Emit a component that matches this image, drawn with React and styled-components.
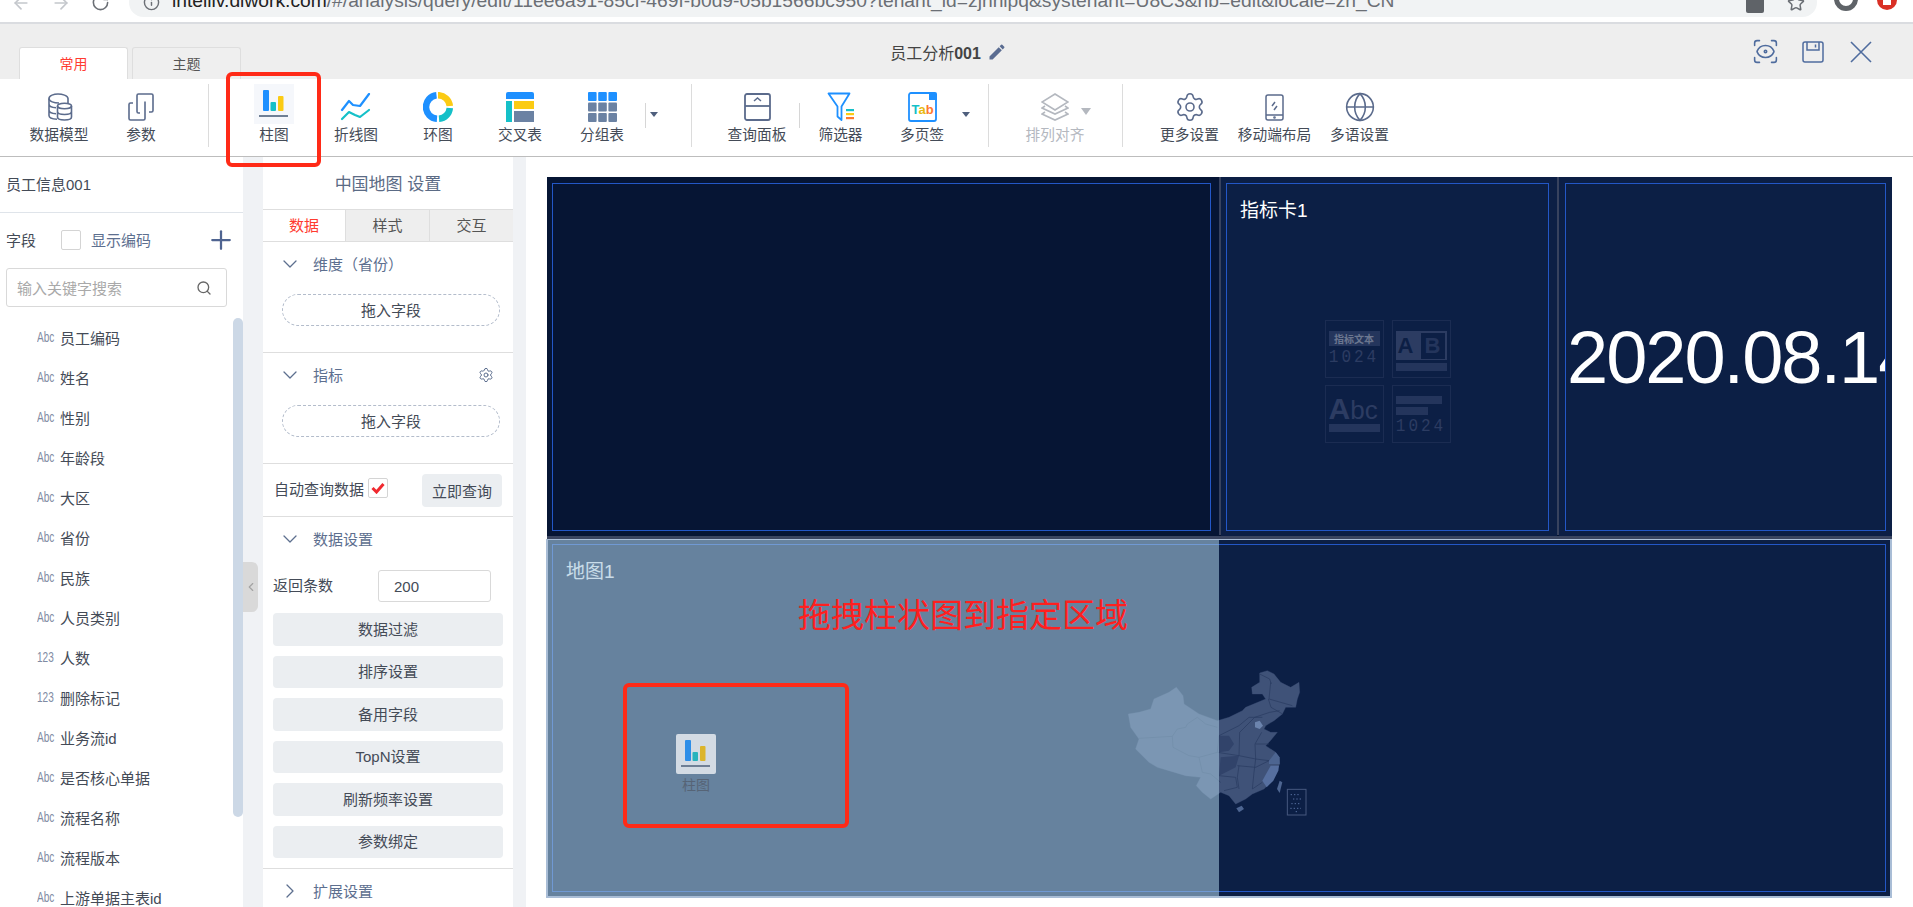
import styled, { createGlobalStyle } from 'styled-components';
import {
  ArrowLeft,
  ArrowRight,
  ChevronDown,
  ChevronLeft,
  ChevronRight,
  Globe,
  Info,
  Plus,
  RotateCw,
  ScanEye,
  Search,
  Settings,
  Star,
} from 'lucide-react';
import { MdEdit } from 'react-icons/md';

const GlobalStyle = createGlobalStyle`
  html, body {
    margin: 0;
    height: 100%;
    overflow: hidden;
    background: #fff;
  }
  * {
    box-sizing: border-box;
  }
  body {
    font-family: 'Liberation Sans', 'Noto Sans CJK SC', sans-serif;
    font-size: 15px;
    color: #444b57;
  }
`;

const Page = styled.div`
  position: relative;
  width: 1913px;
  height: 907px;
  overflow: hidden;
`;

/* browser chrome, cut off at the top of the shot */
const ChromeBar = styled.div`
  height: 24px;
  display: flex;
  align-items: flex-start;
  overflow: hidden;
  background: #fff;
  border-bottom: 2px solid #dadce0;
  color: #6b6f75;
`;

const ChromeIcons = styled.div`
  width: 129px;
  height: 29px;
  margin-top: -12px;
  padding-left: 11px;
  display: flex;
  align-items: center;
  gap: 20px;
  flex-shrink: 0;
`;

const AddressBar = styled.div`
  width: 1688px;
  height: 29px;
  margin-top: -12px;
  padding: 0 12px 0 14px;
  display: flex;
  align-items: center;
  flex-shrink: 0;
  background: #f1f3f4;
  border-radius: 15px;
`;

const Url = styled.span`
  margin-left: 12px;
  padding-bottom: 4px;
  flex: 1;
  font-size: 19.25px;
  white-space: nowrap;
  color: #6b6f75;

  b {
    font-weight: 400;
    color: #222;
  }
`;

const Translate = styled.span`
  width: 18px;
  height: 20px;
  margin-right: 23px;
  border-radius: 2px;
  background: #5f6368;
  flex-shrink: 0;
`;

const Avatar = styled.span`
  width: 24px;
  height: 24px;
  margin: -13px 0 0 17px;
  border-radius: 50%;
  border: 5px solid #5f6368;
  flex-shrink: 0;
`;

const Alert = styled.span`
  position: relative;
  width: 20px;
  height: 20px;
  margin: -10px 0 0 19px;
  border-radius: 50%;
  background: #d93025;
  flex-shrink: 0;

  &::after {
    content: '';
    position: absolute;
    top: 8px;
    left: 6px;
    width: 8px;
    height: 7px;
    background: #fff;
  }
`;

const Header = styled.header`
  height: 55px;
  display: grid;
  grid-template-columns: 1fr auto 1fr;
  background: #eeeeee;
`;

const TabRow = styled.div`
  padding-left: 19px;
  display: flex;
  align-items: flex-end;
  gap: 4px;
`;

const TopTab = styled.div`
  width: 109px;
  height: 32px;
  padding-bottom: 2px;
  display: flex;
  align-items: center;
  justify-content: center;
  font-size: 14px;
  border: 1px solid #dedede;
  border-bottom: 0;
  border-radius: 3px 3px 0 0;
  background: ${({ $active }) => ($active ? '#fff' : '#efefef')};
  color: ${({ $active }) => ($active ? '#ff3b30' : '#555')};
`;

const Title = styled.div`
  display: flex;
  align-items: center;
  gap: 6px;
  margin-right: 16px;
  font-size: 16px;
  color: #444;

  b {
    font-weight: 700;
  }

  svg {
    color: #5a6c91;
  }
`;

const HeaderActions = styled.div`
  padding-right: 41px;
  display: flex;
  align-items: center;
  justify-content: flex-end;
  gap: 26px;
  color: #4f6c9e;
`;

const PreviewIcon = styled(ScanEye)`
  margin: 0 -4px;
`;

const Toolbar = styled.nav`
  height: 78px;
  padding-left: 18px;
  display: flex;
  align-items: flex-start;
  background: #fff;
  border-bottom: 1px solid #bdbdbd;
`;

const ToolItem = styled.div`
  position: relative;
  width: ${({ $w }) => $w || 82}px;
  height: 69px;
  padding-top: 12px;
  display: flex;
  flex-direction: column;
  align-items: center;
  flex-shrink: 0;
  color: ${({ $off }) => ($off ? '#b4b8bf' : '#444b57')};
`;

const ToolIcon = styled.div`
  height: 32px;
  display: flex;
  align-items: center;
  justify-content: center;
`;

const ToolLabel = styled.span`
  font-size: 14.7px;
  line-height: 24px;
  white-space: nowrap;
`;

const SelectedIcon = styled.div`
  position: absolute;
  top: 5px;
  left: 21px;
  width: 40px;
  height: 40px;
  display: flex;
  align-items: center;
  justify-content: center;
  background: #f5f7fb;
`;

const BigSep = styled.div`
  width: 1px;
  height: 63px;
  margin: 5px ${({ $r }) => $r}px 0 ${({ $l }) => $l}px;
  background: #dcdcdc;
  flex-shrink: 0;
`;

const SmallSep = styled.div`
  width: 1px;
  height: 25px;
  margin: 24px 0 0 ${({ $l }) => $l}px;
  background: #d6d6d6;
  flex-shrink: 0;
`;

const Caret = styled.div`
  width: 16px;
  margin: 33px 0 0 ${({ $l }) => $l || 0}px;
  display: flex;
  justify-content: center;
  flex-shrink: 0;

  &::after {
    content: '';
    border: 4px solid transparent;
    border-top: 5px solid #4f5f7d;
    border-bottom: 0;
  }
`;

const GreyCaret = styled.span`
  position: absolute;
  top: 29px;
  left: 67px;
  border: 5px solid transparent;
  border-top: 7px solid #b4b8bf;
  border-bottom: 0;
`;

const Body = styled.main`
  height: 750px;
  display: flex;
`;

const FieldPanel = styled.aside`
  position: relative;
  width: 243px;
  overflow: hidden;
  flex-shrink: 0;
  background: #fff;
`;

const DatasetName = styled.div`
  height: 56px;
  padding: 0 0 2px 6px;
  display: flex;
  align-items: center;
  font-size: 15px;
  border-bottom: 1px solid #dfe4ea;
`;

const FieldTools = styled.div`
  height: 55px;
  padding: 0 7px 2px 6px;
  display: flex;
  align-items: center;
`;

const Checkbox = styled.span`
  width: 20px;
  height: 20px;
  margin: 0 10px 0 ${({ $l }) => $l || 0}px;
  display: inline-flex;
  align-items: center;
  justify-content: center;
  border: 1px solid #d4d4d4;
  border-radius: 2px;
  background: #fff;
  flex-shrink: 0;
`;

const ShowCode = styled.span`
  flex: 1;
  color: #5d6f8f;
`;

const SearchBox = styled.div`
  width: 221px;
  height: 39px;
  margin-left: 6px;
  padding: 0 14px 0 10px;
  display: flex;
  align-items: center;
  justify-content: space-between;
  border: 1px solid #d9d9d9;
  border-radius: 3px;
  color: #a9a9a9;
`;

const FieldList = styled.ul`
  margin: 10px 0 0;
  padding: 0;
  list-style: none;
`;

const FieldItem = styled.li`
  height: 40px;
  padding-left: 37px;
  display: flex;
  align-items: center;
  white-space: nowrap;
`;

const FieldType = styled.span`
  width: 23px;
  font-size: 14px;
  color: #7f8ba3;
  transform: scaleX(0.72);
  transform-origin: left center;
`;

const ScrollThumb = styled.div`
  position: absolute;
  top: 161px;
  right: 0;
  width: 10px;
  height: 499px;
  border-radius: 5px;
  background: #ccd8e6;
`;

const Gutter = styled.div`
  position: relative;
  width: ${({ $w }) => $w}px;
  flex-shrink: 0;
  background: #f0f2f5;
`;

const CollapseHandle = styled.div`
  position: absolute;
  top: 405px;
  left: 0;
  width: 15px;
  height: 50px;
  display: flex;
  align-items: center;
  justify-content: center;
  border-radius: 0 6px 6px 0;
  background: #d9d9d9;
  color: #a3a3a3;
`;

const SettingsPanel = styled.section`
  width: 250px;
  overflow: hidden;
  flex-shrink: 0;
  background: #fff;
`;

const SettingsTitle = styled.div`
  height: 52px;
  padding-bottom: 2px;
  display: flex;
  align-items: center;
  justify-content: center;
  font-size: 17px;
  color: #5b6b85;
`;

const SettingsTabs = styled.div`
  height: 33px;
  display: grid;
  grid-template-columns: 82px 84px 84px;
  border-top: 1px solid #dedede;
  border-bottom: 1px solid #dedede;
`;

const SettingsTab = styled.div`
  padding-bottom: 2px;
  display: flex;
  align-items: center;
  justify-content: center;
  background: ${({ $active }) => ($active ? '#fff' : '#eeeeee')};
  color: ${({ $active }) => ($active ? '#ff3b30' : '#555')};
  border-left: ${({ $active }) => ($active ? '0' : '1px solid #dedede')};
`;

const Section = styled.div`
  padding: 10px 0 ${({ $pb }) => $pb}px;
  border-bottom: ${({ $last }) => ($last ? '0' : '1px solid #dedede')};
`;

const SectionHead = styled.div`
  height: 26px;
  padding: 0 19px 3px 15px;
  display: flex;
  align-items: center;
  gap: 11px;
  color: #5d6f8f;

  span {
    flex: 1;
  }
`;

const DropPill = styled.div`
  width: 218px;
  height: 32px;
  margin: 16px 0 0 19px;
  padding-bottom: 2px;
  display: flex;
  align-items: center;
  justify-content: center;
  border: 1px dashed #b3bccb;
  border-radius: 16px;
`;

const AutoRow = styled.div`
  height: 53px;
  padding: 0 10px 0 11px;
  display: flex;
  align-items: center;
  border-bottom: 1px solid #dedede;
  white-space: nowrap;
`;

const AutoLabel = styled.div`
  display: flex;
  align-items: center;
  margin-bottom: 4px;
`;

const QueryButton = styled.div`
  width: 80px;
  height: 33px;
  margin-left: 24px;
  display: flex;
  align-items: center;
  justify-content: center;
  border-radius: 4px;
  background: #ebeef1;
`;

const CountRow = styled.div`
  height: 32px;
  margin: 17px 0 11px;
  padding-left: 10px;
  display: flex;
  align-items: center;
`;

const CountLabel = styled.span`
  margin-bottom: 3px;
`;

const CountInput = styled.div`
  width: 113px;
  height: 32px;
  margin-left: 45px;
  padding-left: 15px;
  display: flex;
  align-items: center;
  border: 1px solid #d9d9d9;
  border-radius: 3px;
  font-size: 15px;
`;

const ButtonStack = styled.div`
  padding: 0 10px;
  display: flex;
  flex-direction: column;
  gap: 10px;
`;

const WideButton = styled.div`
  height: 32.5px;
  padding-bottom: 2px;
  display: flex;
  align-items: center;
  justify-content: center;
  border-radius: 4px;
  background: #ebeef1;
`;

const Canvas = styled.div`
  flex: 1;
  padding: 20px 21px 0 21px;
  background: #fff;
`;

const TopRow = styled.div`
  height: 359px;
  display: flex;
  background: #06142f;
`;

const Cell = styled.div`
  width: ${({ $w }) => $w}px;
  padding: 6px ${({ $r }) => $r}px 5px ${({ $l }) => $l}px;
  flex-shrink: 0;
  background: ${({ $dark }) => ($dark ? '#061534' : '#0c1f45')};
`;

const CellDivider = styled.div`
  width: 2px;
  height: 358px;
  flex-shrink: 0;
  background: #37425e;
`;

const CardFrame = styled.div`
  height: 100%;
  display: flex;
  flex-direction: column;
  overflow: hidden;
  border: 1px solid #2357c7;
`;

const CardTitle = styled.div`
  height: 26px;
  margin: 14px 0 0 13px;
  font-size: 19px;
  line-height: 26px;
  color: #fff;
`;

const TileArea = styled.div`
  flex: 1;
  padding-top: 9px;
  display: flex;
  align-items: center;
  justify-content: center;
`;

const TileGrid = styled.div`
  display: grid;
  grid-template-columns: 59px 59px;
  grid-template-rows: 58px 58px;
  gap: 7px 8px;
`;

const Tile = styled.div`
  padding: 10px 3px 3px;
  display: flex;
  flex-direction: column;
  gap: 3px;
  overflow: hidden;
  border: 1px solid #1b2c52;
  color: #2c3c62;
`;

const TileLabel = styled.div`
  height: 15px;
  display: flex;
  align-items: center;
  justify-content: center;
  font-size: 10px;
  font-weight: 700;
  white-space: nowrap;
  background: #24355c;
  color: #6c7790;
`;

const Digits = styled.div`
  font-family: 'Liberation Mono', monospace;
  font-size: 16px;
  line-height: 17px;
  letter-spacing: 3px;
  white-space: nowrap;
  text-align: center;
  color: #2c3c62;
  transform: scaleY(1.2);
`;

const TileBar = styled.div`
  width: ${({ $w }) => $w || '100%'};
  height: ${({ $h }) => $h || 8}px;
  flex-shrink: 0;
  background: #24355c;
`;

const AbBlock = styled.div`
  height: 29px;
  padding: 0 2px;
  display: flex;
  align-items: center;
  justify-content: space-between;
  font-size: 22px;
  font-weight: 700;
  background: #2c3c62;
  color: #0c1f45;

  span + span {
    padding: 0 4px;
    background: #0c1f45;
    color: #24355c;
  }
`;

const AbcText = styled.div`
  height: 25px;
  font-size: 26px;
  line-height: 25px;
  white-space: nowrap;
  color: #2c3c62;

  b {
    font-size: 30px;
  }
`;

const DateText = styled.div`
  height: 100%;
  padding-left: 1px;
  display: flex;
  align-items: center;
  font-size: 74px;
  letter-spacing: -2px;
  white-space: nowrap;
  color: #fff;
`;

const Band = styled.div`
  height: 3px;
  background: #3a4560;
`;

const MapBlock = styled.div`
  position: relative;
  width: 1346px;
  height: 359px;
  margin-left: -1px;
  padding: 4px;
  border: 2px solid #a9bdd6;
  border-top-width: 1px;
  background: #0c1f45;
`;

const MapArea = styled.div`
  flex: 1;
  padding-top: 12px;
  display: flex;
  align-items: center;
  justify-content: center;
`;

const DropOverlay = styled.div`
  position: absolute;
  top: 0;
  bottom: 0;
  left: 0;
  width: 671px;
  background: rgba(164, 196, 219, 0.6);
`;

const Hint = styled.div`
  position: absolute;
  top: 50px;
  left: 250px;
  font-family: 'Noto Sans CJK SC', sans-serif;
  font-size: 33px;
  line-height: 46px;
  white-space: nowrap;
  color: #ff1f1f;
`;

const RedBox = styled.div`
  position: absolute;
  top: ${({ $t }) => $t}px;
  left: ${({ $l }) => $l}px;
  width: ${({ $w }) => $w}px;
  height: ${({ $h }) => $h}px;
  border: 4px solid #ff2a17;
  border-radius: 6px;
`;

const DragGhost = styled.div`
  position: absolute;
  top: 194px;
  left: 128px;
  width: 40px;
  display: flex;
  flex-direction: column;
  align-items: center;
  font-size: 14px;
  line-height: 22px;
  color: #566476;
`;

const GhostIcon = styled.div`
  width: 40px;
  height: 40px;
  display: flex;
  align-items: center;
  justify-content: center;
  border-radius: 2px;
  background: #d3dbe4;
`;

const SLATE = '#5b6b8c';

const DbIcon = () => (
  <svg width="28" height="32" viewBox="0 0 28 32" fill="none" stroke={SLATE} strokeWidth="1.6">
    <path d="M14 12c-5 0-10-1.500-10-4.500S9 3 13 3s10 1.500 10 4.500v5" />
    <path d="M4 7.500v17c0 2 3 3.500 8 3.800M4 13c0 2 3 3.500 7 3.800M4 19c0 2 3 3.500 7 3.800" />
    <ellipse cx="19.500" cy="15" rx="7" ry="2.800" />
    <path d="M12.500 15v11c0 1.700 3 3 7 3s7-1.300 7-3V15M12.500 20.500c0 1.700 3 3 7 3s7-1.300 7-3" />
  </svg>
);

const ParamIcon = () => (
  <svg width="28" height="32" viewBox="0 0 28 32" fill="none" stroke={SLATE} strokeWidth="1.6">
    <path d="M10 9V4.500A1.500 1.500 0 0 1 11.500 3h13A1.500 1.500 0 0 1 26 4.500v15a1.500 1.500 0 0 1-1.500 1.500H22" />
    <path d="M18 12v15.500a1.500 1.500 0 0 1-1.500 1.500h-13A1.500 1.500 0 0 1 2 27.500v-14A1.500 1.500 0 0 1 3.500 12H6" />
    <path d="M10 9v11.500a1.500 1.500 0 0 0 1.500 1.500H13M18 12v-1.500" />
  </svg>
);

const BarChartIcon = ({ dim }) => (
  <svg width="30" height="28" viewBox="0 0 30 28">
    <rect x="4" y="0" width="6" height="21" rx="1" fill={dim ? '#2d8ee8' : '#1e90ff'} />
    <rect x="11.500" y="12" width="5.500" height="9" rx="1" fill={dim ? '#27b3bd' : '#15c0c8'} />
    <rect x="19" y="6" width="5.500" height="15" rx="1" fill={dim ? '#dcb52c' : '#fbcb14'} />
    <rect x="0" y="25" width="29" height="2" fill="#6f7f95" />
  </svg>
);

const LineChartIcon = () => (
  <svg width="32" height="28" viewBox="0 0 32 28" fill="none" strokeWidth="2.200" strokeLinecap="round" strokeLinejoin="round">
    <path d="M2 17 9 8l4 4 7 1L29 1" stroke="#1e90ff" />
    <path d="M2 26l7-7 6 3 5 2 9-7" stroke="#15c0c8" />
  </svg>
);

const DonutIcon = () => (
  <svg width="30" height="30" viewBox="0 0 30 30" fill="none" strokeWidth="6.500">
    <path d="M15 3.200A11.800 11.800 0 0 1 26.800 14" stroke="#fbcb14" />
    <path d="M26.800 16A11.800 11.800 0 0 1 16 26.800" stroke="#15c0c8" />
    <path d="M14 26.800A11.800 11.800 0 0 1 13.500 3.300" stroke="#1e90ff" />
  </svg>
);

const CrossTableIcon = () => (
  <svg width="28" height="30" viewBox="0 0 28 30">
    <path d="M2 0h24a2 2 0 0 1 2 2v5H0V2a2 2 0 0 1 2-2z" fill="#1e90ff" />
    <rect x="0" y="9" width="6" height="21" fill="#15c0c8" />
    <rect x="8" y="9" width="20" height="8" fill="#fbcb14" />
    <rect x="8" y="19" width="20" height="11" fill="#6b82a3" />
  </svg>
);

const GroupTableIcon = () => {
  const cells = [0, 1, 2, 3, 4, 5, 6, 7, 8];
  return (
    <svg width="29" height="30" viewBox="0 0 29 30">
      {cells.map((n) => (
        <rect
          key={n}
          x={(n % 3) * 10.2}
          y={Math.floor(n / 3) * 10.5}
          width="8.600"
          height="9"
          rx="1"
          fill={n < 3 ? '#1e90ff' : '#6b82a3'}
        />
      ))}
    </svg>
  );
};

const PanelIcon = () => (
  <svg width="27" height="28" viewBox="0 0 27 28" fill="none" stroke={SLATE} strokeWidth="1.800">
    <rect x="1" y="1" width="25" height="26" rx="2" />
    <path d="M1 13h25" />
    <path d="M10 8l3.500-3L17 8" strokeWidth="1.500" />
  </svg>
);

const FilterIcon = () => (
  <svg width="28" height="30" viewBox="0 0 28 30" fill="none">
    <path d="M1.500 1.500h21l-8 13v13.500l-4-3.500V14.500z" stroke="#1e90ff" strokeWidth="1.800" strokeLinejoin="round" />
    <rect x="19" y="17" width="8" height="2.200" fill="#15c0c8" />
    <rect x="19" y="21" width="8" height="2.200" fill="#fbcb14" />
    <rect x="19" y="25" width="8" height="2.200" fill="#ff7a2e" />
  </svg>
);

const TabIcon = () => (
  <svg width="29" height="30" viewBox="0 0 29 30" fill="none">
    <path d="M21 1H3a2 2 0 0 0-2 2v24a2 2 0 0 0 2 2h23a2 2 0 0 0 2-2V8" stroke="#1e90ff" strokeWidth="1.800" />
    <path d="M21 0h6a2 2 0 0 1 2 2v6h-8z" fill="#1e90ff" />
    <text x="14.500" y="22" textAnchor="middle" fontFamily="Liberation Sans, sans-serif" fontSize="13" fontWeight="700">
      <tspan fill="#15c0c8">T</tspan>
      <tspan fill="#e8b90f">a</tspan>
      <tspan fill="#ff7a2e">b</tspan>
    </text>
  </svg>
);

const LayersIcon = () => (
  <svg width="28" height="28" viewBox="0 0 28 28" fill="none" stroke="#b4b8bf" strokeWidth="1.600">
    <path d="M14 1 27 9l-13 8L1 9z" />
    <path d="M4 13 1 15l13 6 13-6-3-2" />
    <path d="M4 19l-3 2 13 6 13-6-3-2" />
  </svg>
);

const MobileIcon = () => (
  <svg width="19" height="27" viewBox="0 0 19 27" fill="none" stroke={SLATE} strokeWidth="1.500">
    <rect x="1" y="1" width="17" height="25" rx="2" />
    <path d="M1 21h17M7 12l3-4M9 16l3-4" />
    <circle cx="9.500" cy="23.500" r="0.600" />
  </svg>
);

const SaveIcon = () => (
  <svg width="22" height="22" viewBox="0 0 22 22" fill="none" stroke="currentColor" strokeWidth="1.500">
    <rect x="1" y="1" width="20" height="20" rx="2" />
    <path d="M5 1v8h12V1M13.500 3.500v3" />
  </svg>
);

const CloseIcon = () => (
  <svg width="22" height="22" viewBox="0 0 22 22" fill="none" stroke="currentColor" strokeWidth="1.600">
    <path d="M1 1l20 20M21 1 1 21" />
  </svg>
);

const ChinaMap = () => (
  <svg width="260" height="190" viewBox="0 0 780 570">
    <path
      d="M118 195l32-5 35-10 10-30 45-20 22-15 20 25 3 25 45 30 55 20 35-10 40-20 10-10 60-25-10-15-30 0-2-20 24-15 0-28 23-7 20 10 20 25 30 15 25-15 2 30-7 20-5 25-30 0-10 20-25 20-25 15-5 10 20 10 20 0-25 30-10 10 30 20 10 15 2 20-12 25-15 30-20 20-35 15-20 15-30 15-20-25-25-10-30 20-25-20-18-20 13-25-45-5-50-15-35-10-25-15-40-40 10-30-25-35z"
      fill="#3f5278"
      stroke="#3f5278"
    />
    <path d="M520 395l25-45 25 0-2 15-15 30-20 20z" fill="#566f9f" />
    <path d="M540 335l20-25 12 15 0 20-32 0z" fill="#4d6591" />
    <path d="M390 260l30 0 15 25-15 20-30 5z" fill="#31436a" />
    <path d="M395 325l55-5-10 35-50 25z" fill="#31436a" />
    <path d="M498 220l14-5 10 15-10 10-14-5z" fill="#6c84ad" />
    <g fill="none" stroke="#27395f" strokeWidth="2">
      <path d="M150 268l100-6 2 33 48 25 30 5 10 45 25 5 30 25M265 240l25-5 5-10 30-20 25 20 35 10M250 262l15-22" />
      <path d="M330 325l55-15 5-50 30-15 30-15 30-25 40 0M385 310l65 10 50 10 40 5" />
      <path d="M450 320l2-70 25-25 20-20 45-15 30-5M500 330l-2-45 20-35M540 285l-40 0" />
      <path d="M450 350l-5 35 5 35M500 330l-5 40-5 50 30-20M445 350l55 5 40-20M390 380l50 5 5 30-40 10" />
      <path d="M538 150l8 25 35 20M545 100l-5 50 70 20M512 75l30 15 5 15" />
    </g>
    <path d="M442 478l16-8 7 10-15 10z" fill="#4d6591" />
    <path d="M572 395l8 5-8 32-8-12z" fill="#4d6591" />
    <rect x="595" y="421" width="56" height="77" fill="none" stroke="#46587f" strokeWidth="3" />
    <path d="M605 437h30M612 450h24M607 464h28M604 478h32M620 488h6" stroke="#566f9f" strokeWidth="3" strokeDasharray="4 6" />
  </svg>
);

const fields = [
  ['Abc', '员工编码'],
  ['Abc', '姓名'],
  ['Abc', '性别'],
  ['Abc', '年龄段'],
  ['Abc', '大区'],
  ['Abc', '省份'],
  ['Abc', '民族'],
  ['Abc', '人员类别'],
  ['123', '人数'],
  ['123', '删除标记'],
  ['Abc', '业务流id'],
  ['Abc', '是否核心单据'],
  ['Abc', '流程名称'],
  ['Abc', '流程版本'],
  ['Abc', '上游单据主表id'],
];

const dataButtons = ['数据过滤', '排序设置', '备用字段', 'TopN设置', '刷新频率设置', '参数绑定'];

const App = () => {
  return (
    <Page>
      <GlobalStyle />
      <ChromeBar>
        <ChromeIcons>
          <ArrowLeft size={20} color="#c4c7cc" />
          <ArrowRight size={20} color="#c4c7cc" />
          <RotateCw size={19} />
        </ChromeIcons>
        <AddressBar>
          <Info size={17} />
          <Url>
            <b>intelliv.diwork.com</b>/#/analysis/query/edit/11ee6a91-85cf-469f-b0d9-05b1566bc950?tenant_id=zjhnlpq&amp;systenant=U8C3&amp;hb=edit&amp;locale=zh_CN
          </Url>
          <Translate />
          <Star size={18} />
        </AddressBar>
        <Avatar />
        <Alert />
      </ChromeBar>

      <Header>
        <TabRow>
          <TopTab $active>常用</TopTab>
          <TopTab>主题</TopTab>
        </TabRow>
        <Title>
          <span>员工分析<b>001</b></span>
          <MdEdit size={20} />
        </Title>
        <HeaderActions>
          <PreviewIcon size={29} strokeWidth={1.3} />
          <SaveIcon />
          <CloseIcon />
        </HeaderActions>
      </Header>

      <Toolbar>
        <ToolItem>
          <ToolIcon><DbIcon /></ToolIcon>
          <ToolLabel>数据模型</ToolLabel>
        </ToolItem>
        <ToolItem>
          <ToolIcon><ParamIcon /></ToolIcon>
          <ToolLabel>参数</ToolLabel>
        </ToolItem>
        <BigSep $l={26} $r={24} />
        <ToolItem>
          <SelectedIcon><BarChartIcon /></SelectedIcon>
          <ToolIcon />
          <ToolLabel>柱图</ToolLabel>
        </ToolItem>
        <ToolItem>
          <ToolIcon><LineChartIcon /></ToolIcon>
          <ToolLabel>折线图</ToolLabel>
        </ToolItem>
        <ToolItem>
          <ToolIcon><DonutIcon /></ToolIcon>
          <ToolLabel>环图</ToolLabel>
        </ToolItem>
        <ToolItem>
          <ToolIcon><CrossTableIcon /></ToolIcon>
          <ToolLabel>交叉表</ToolLabel>
        </ToolItem>
        <ToolItem>
          <ToolIcon><GroupTableIcon /></ToolIcon>
          <ToolLabel>分组表</ToolLabel>
        </ToolItem>
        <SmallSep $l={2} />
        <Caret />
        <BigSep $l={29} $r={24} />
        <ToolItem>
          <ToolIcon><PanelIcon /></ToolIcon>
          <ToolLabel>查询面板</ToolLabel>
        </ToolItem>
        <SmallSep $l={1} />
        <ToolItem $w={81}>
          <ToolIcon><FilterIcon /></ToolIcon>
          <ToolLabel>筛选器</ToolLabel>
        </ToolItem>
        <ToolItem>
          <ToolIcon><TabIcon /></ToolIcon>
          <ToolLabel>多页签</ToolLabel>
        </ToolItem>
        <Caret $l={-5} />
        <BigSep $l={14} $r={25} />
        <ToolItem $off>
          <ToolIcon><LayersIcon /></ToolIcon>
          <GreyCaret />
          <ToolLabel>排列对齐</ToolLabel>
        </ToolItem>
        <BigSep $l={26} $r={24} />
        <ToolItem $w={85}>
          <ToolIcon><Settings size={32} color={SLATE} strokeWidth={1.2} /></ToolIcon>
          <ToolLabel>更多设置</ToolLabel>
        </ToolItem>
        <ToolItem $w={85}>
          <ToolIcon><MobileIcon /></ToolIcon>
          <ToolLabel>移动端布局</ToolLabel>
        </ToolItem>
        <ToolItem $w={85}>
          <ToolIcon><Globe size={32} color={SLATE} strokeWidth={1.2} /></ToolIcon>
          <ToolLabel>多语设置</ToolLabel>
        </ToolItem>
      </Toolbar>

      <Body>
        <FieldPanel>
          <DatasetName>员工信息001</DatasetName>
          <FieldTools>
            字段
            <Checkbox $l={25} />
            <ShowCode>显示编码</ShowCode>
            <Plus size={30} color="#4f6491" strokeWidth={1.8} />
          </FieldTools>
          <SearchBox>
            输入关键字搜索
            <Search size={16} color="#666" />
          </SearchBox>
          <FieldList>
            {fields.map(([type, name]) => (
              <FieldItem key={name}>
                <FieldType>{type}</FieldType>
                {name}
              </FieldItem>
            ))}
          </FieldList>
          <ScrollThumb />
        </FieldPanel>

        <Gutter $w={20}>
          <CollapseHandle>
            <ChevronLeft size={14} />
          </CollapseHandle>
        </Gutter>

        <SettingsPanel>
          <SettingsTitle>中国地图 设置</SettingsTitle>
          <SettingsTabs>
            <SettingsTab $active>数据</SettingsTab>
            <SettingsTab>样式</SettingsTab>
            <SettingsTab>交互</SettingsTab>
          </SettingsTabs>
          <Section $pb={26}>
            <SectionHead>
              <ChevronDown size={24} strokeWidth={1.3} />
              <span>维度（省份）</span>
            </SectionHead>
            <DropPill>拖入字段</DropPill>
          </Section>
          <Section $pb={26}>
            <SectionHead>
              <ChevronDown size={24} strokeWidth={1.3} />
              <span>指标</span>
              <Settings size={16} strokeWidth={1.5} />
            </SectionHead>
            <DropPill>拖入字段</DropPill>
          </Section>
          <AutoRow>
            <AutoLabel>
              自动查询数据
              <Checkbox $l={4}>
                <svg width="14" height="12" viewBox="0 0 14 12" fill="none">
                  <path d="M1.500 6l4 4 7-8" stroke="#f0292f" strokeWidth="3" />
                </svg>
              </Checkbox>
            </AutoLabel>
            <QueryButton>立即查询</QueryButton>
          </AutoRow>
          <Section $pb={10}>
            <SectionHead>
              <ChevronDown size={24} strokeWidth={1.3} />
              <span>数据设置</span>
            </SectionHead>
            <CountRow>
              <CountLabel>返回条数</CountLabel>
              <CountInput>200</CountInput>
            </CountRow>
            <ButtonStack>
              {dataButtons.map((label) => (
                <WideButton key={label}>{label}</WideButton>
              ))}
            </ButtonStack>
          </Section>
          <Section $pb={0} $last>
            <SectionHead>
              <ChevronRight size={24} strokeWidth={1.3} />
              <span>扩展设置</span>
            </SectionHead>
          </Section>
        </SettingsPanel>

        <Gutter $w={13} />

        <Canvas>
          <TopRow>
            <Cell $w={672} $l={5} $r={8} $dark>
              <CardFrame />
            </Cell>
            <CellDivider />
            <Cell $w={336} $l={5} $r={8}>
              <CardFrame>
                <CardTitle>指标卡1</CardTitle>
                <TileArea>
                  <TileGrid>
                    <Tile>
                      <TileLabel>指标文本</TileLabel>
                      <Digits>1024</Digits>
                    </Tile>
                    <Tile>
                      <AbBlock>
                        <span>A</span>
                        <span>B</span>
                      </AbBlock>
                      <TileBar />
                    </Tile>
                    <Tile>
                      <AbcText><b>A</b>bc</AbcText>
                      <TileBar />
                    </Tile>
                    <Tile>
                      <TileBar $w="46px" />
                      <TileBar $w="32px" />
                      <Digits>1024</Digits>
                    </Tile>
                  </TileGrid>
                </TileArea>
              </CardFrame>
            </Cell>
            <CellDivider />
            <Cell $w={333} $l={6} $r={6}>
              <CardFrame>
                <DateText>2020.08.14</DateText>
              </CardFrame>
            </Cell>
          </TopRow>
          <Band />
          <MapBlock>
            <CardFrame>
              <CardTitle>地图1</CardTitle>
              <MapArea>
                <ChinaMap />
              </MapArea>
            </CardFrame>
            <DropOverlay />
            <Hint>拖拽柱状图到指定区域</Hint>
            <RedBox $t={143} $l={75} $w={226} $h={145} />
            <DragGhost>
              <GhostIcon><BarChartIcon dim /></GhostIcon>
              柱图
            </DragGhost>
          </MapBlock>
        </Canvas>
      </Body>

      <RedBox $t={72} $l={226} $w={95} $h={95} />
    </Page>
  );
};

export default App;
